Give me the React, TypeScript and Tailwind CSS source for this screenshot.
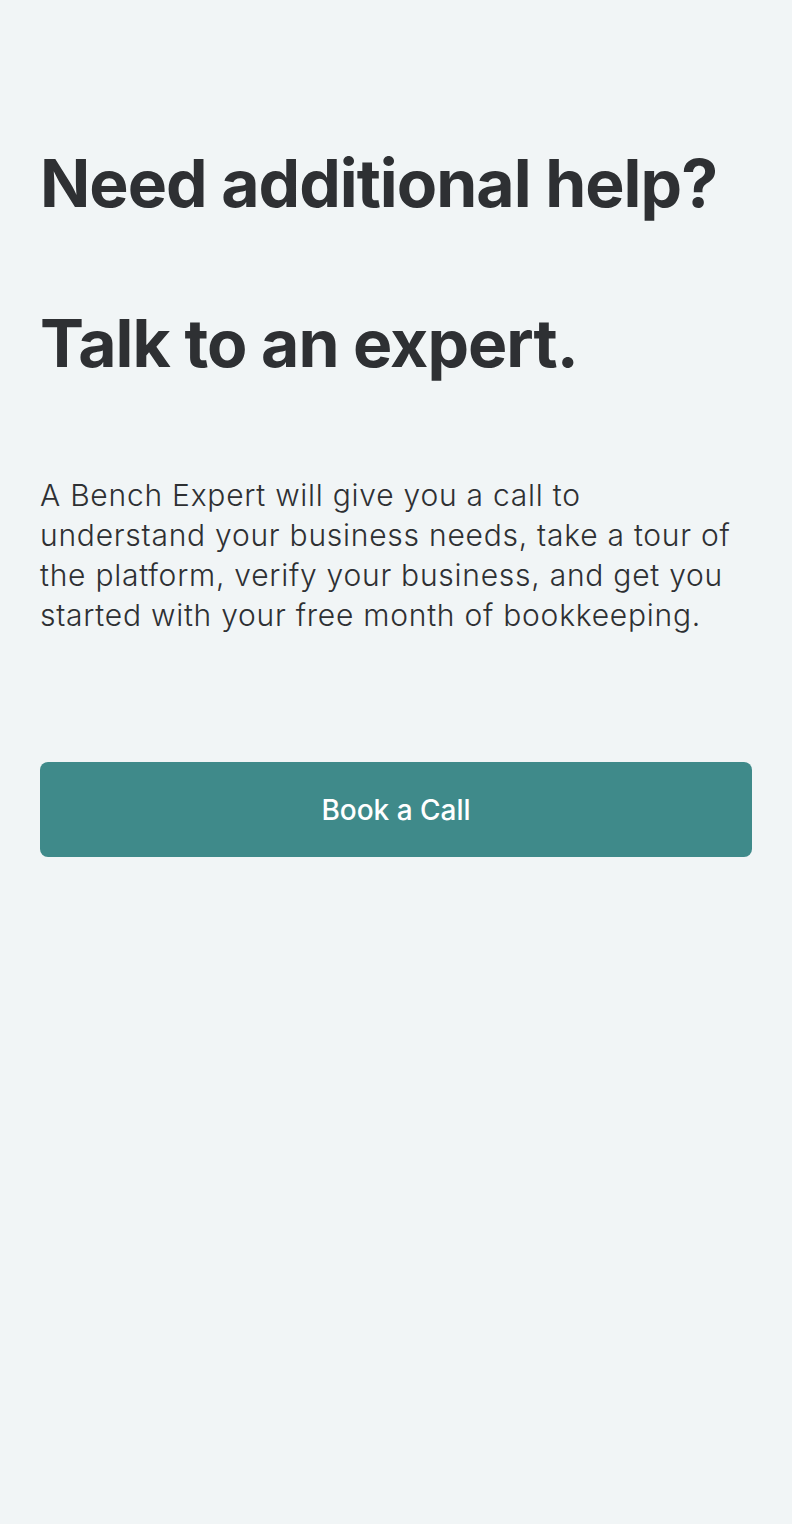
export default function App() {
  return (
    <div className="min-h-[1524px] bg-[#f1f5f6] px-10 pt-[143px] font-['Inter',sans-serif] text-[#2e3033]">
      <h1 className="text-[66px] font-bold leading-[80px] tracking-[-0.015em]">
        Need additional help?
        <br />
        <br />
        Talk to an expert.
      </h1>
      <p className="mt-[92px] text-[30px] font-light leading-[40px] tracking-[0.025em]">
        A Bench Expert will give you a call to
        <br />
        understand your business needs, take a tour of
        <br />
        the platform, verify your business, and get you
        <br />
        started with your free month of bookkeeping.
      </p>
      <button className="mt-[127px] flex h-[95px] w-full items-center justify-center rounded-lg bg-[#3f8a8a] text-[28px] font-medium text-white">
        Book a Call
      </button>
    </div>
  )
}
